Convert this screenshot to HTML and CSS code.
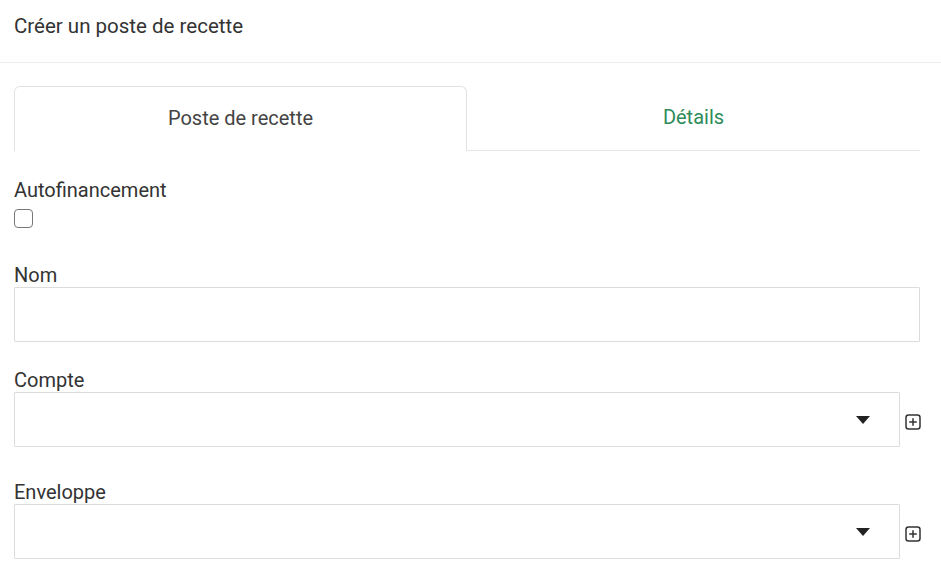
FILE: index.html
```html
<!DOCTYPE html>
<html lang="fr">
<head>
<meta charset="utf-8">
<title>Créer un poste de recette</title>
<link rel="stylesheet" href="styles.css">
</head>
<body>
<header class="page-header">Créer un poste de recette</header>
<main class="content">
  <nav class="tabs">
    <div class="tab tab-active">Poste de recette</div>
    <div class="tab tab-link">Détails</div>
  </nav>
  <form class="form">
    <div class="field field-check">
      <label class="label">Autofinancement</label>
      <span class="checkbox"></span>
    </div>
    <div class="field field-nom">
      <label class="label">Nom</label>
      <div class="input"></div>
    </div>
    <div class="field field-compte">
      <label class="label">Compte</label>
      <div class="select-row">
        <div class="input select"><span class="caret"></span></div>
        <svg class="plus" viewBox="0 0 16 16" width="16" height="16"><rect x="1" y="1" width="14" height="14" rx="2.5" fill="none" stroke="#333" stroke-width="1.5"/><path d="M8 4.2v7.6M4.2 8h7.6" stroke="#333" stroke-width="1.5"/></svg>
      </div>
    </div>
    <div class="field">
      <label class="label">Enveloppe</label>
      <div class="select-row">
        <div class="input select"><span class="caret"></span></div>
        <svg class="plus" viewBox="0 0 16 16" width="16" height="16"><rect x="1" y="1" width="14" height="14" rx="2.5" fill="none" stroke="#333" stroke-width="1.5"/><path d="M8 4.2v7.6M4.2 8h7.6" stroke="#333" stroke-width="1.5"/></svg>
      </div>
    </div>
  </form>
</main>
</body>
</html>
```

FILE: styles.css
```css
html, body {
  margin: 0;
  padding: 0;
  background: #fff;
}
body {
  font-family: Roboto, "Liberation Sans", sans-serif;
  font-size: 20px;
  color: #333;
}
.page-header {
  height: 63px;
  box-sizing: border-box;
  padding: 14px 14px 0;
  border-bottom: 1px solid #ececec;
  line-height: 24px;
  font-size: 20.5px;
}
.content {
  padding: 23px 21px 0 14px;
}
.tabs {
  display: grid;
  grid-template-columns: 1fr 1fr;
  height: 65px;
}
.tab {
  display: flex;
  align-items: center;
  justify-content: center;
  box-sizing: border-box;
  padding-bottom: 2px;
  line-height: 24px;
}
.tab-active {
  border: 1px solid #e2e2e2;
  border-bottom: none;
  border-radius: 6px 6px 0 0;
  color: #444;
}
.tab-link {
  color: #2e8b5a;
  border-bottom: 1px solid #e6e6e6;
}
.form {
  display: flex;
  flex-direction: column;
  padding-top: 27px;
}
.field {
  display: flex;
  flex-direction: column;
}
.field-check {
  margin-bottom: 35px;
}
.field-nom {
  margin-bottom: 26px;
}
.field-compte {
  margin-bottom: 33px;
}
.label {
  line-height: 24px;
}
.checkbox {
  width: 19px;
  height: 19px;
  box-sizing: border-box;
  border: 1.5px solid #777;
  border-radius: 4px;
  margin-top: 7px;
}
.input {
  height: 55px;
  box-sizing: border-box;
  border: 1px solid #dcdcdc;
  border-radius: 1px;
}
.select-row {
  display: flex;
  align-items: center;
  gap: 5px;
}
.select {
  flex: 1;
  display: flex;
  align-items: center;
  justify-content: flex-end;
  padding-right: 29px;
}
.caret {
  width: 0;
  height: 0;
  border-left: 7px solid transparent;
  border-right: 7px solid transparent;
  border-top: 8px solid #222;
}
.plus {
  flex: none;
  width: 16px;
  height: 16px;
  margin-right: -1px;
  margin-top: 5px;
}
```
